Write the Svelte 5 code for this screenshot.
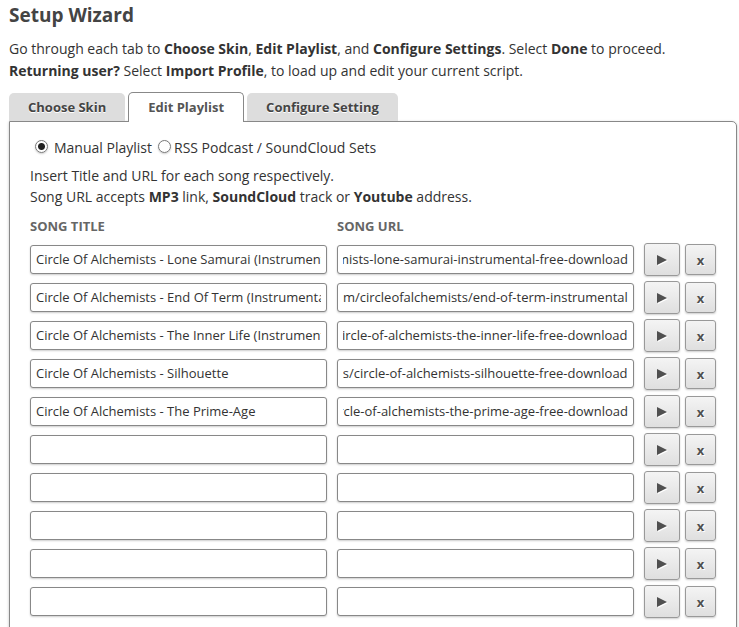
<script>
  const tabs = ["Choose Skin", "Edit Playlist", "Configure Setting"];
  const base = "https://soundcloud.com/circleofalchemists/";

  let activeTab = $state("Edit Playlist");
  let source = $state("manual");

  let songs = $state([
    {
      title: "Circle Of Alchemists - Lone Samurai (Instrumental)",
      url: base + "circle-of-alchemists-lone-samurai-instrumental-free-download",
    },
    {
      title: "Circle Of Alchemists - End Of Term (Instrumental)",
      url: base + "end-of-term-instrumental",
    },
    {
      title: "Circle Of Alchemists - The Inner Life (Instrumental)",
      url: base + "circle-of-alchemists-the-inner-life-free-download",
    },
    {
      title: "Circle Of Alchemists - Silhouette",
      url: base + "circle-of-alchemists-silhouette-free-download",
    },
    {
      title: "Circle Of Alchemists - The Prime-Age",
      url: base + "circle-of-alchemists-the-prime-age-free-download",
    },
    { title: "", url: "" },
    { title: "", url: "" },
    { title: "", url: "" },
    { title: "", url: "" },
    { title: "", url: "" },
  ]);

  // long urls only differ at the end, so show that part
  const scrollToEnd = (node) => {
    node.scrollLeft = node.scrollWidth;
  };

  const clearSong = (song) => {
    song.title = "";
    song.url = "";
  };
</script>

<main>
  <h1>Setup Wizard</h1>
  <p class="intro">
    Go through each tab to <b>Choose Skin</b>, <b>Edit Playlist</b>, and <b>Configure Settings</b>. Select <b>Done</b> to proceed.<br />
    <b>Returning user?</b> Select <b>Import Profile</b>, to load up and edit your current script.
  </p>

  <div class="tabs" role="tablist">
    {#each tabs as tab}
      <button
        class="tab"
        class:active={tab === activeTab}
        role="tab"
        aria-selected={tab === activeTab}
        onclick={() => (activeTab = tab)}>{tab}</button>
    {/each}
  </div>

  <section class="panel">
    <div class="sources">
      <label class="manual">
        <input type="radio" name="source" value="manual" bind:group={source} />
        Manual Playlist
      </label>
      <label>
        <input type="radio" name="source" value="rss" bind:group={source} />
        RSS Podcast / SoundCloud Sets
      </label>
    </div>

    <p class="help">
      Insert Title and URL for each song respectively.<br />
      Song URL accepts <b>MP3</b> link, <b>SoundCloud</b> track or <b>Youtube</b> address.
    </p>

    <div class="row heads">
      <span id="title-head">Song Title</span>
      <span id="url-head">Song URL</span>
    </div>

    {#each songs as song}
      <div class="row">
        <input class="field" type="text" aria-labelledby="title-head" bind:value={song.title} />
        <input class="field" type="text" aria-labelledby="url-head" bind:value={song.url} use:scrollToEnd />
        <div class="actions">
          <button class="btn play" aria-label="Play">
            <svg width="11" height="12" viewBox="0 0 11 12"><path d="M1 2v10l10-5z" fill="#fff" /><path d="M0 1v10l10-5z" fill="#505050" /></svg>
          </button>
          <button class="btn remove" onclick={() => clearSong(song)}>x</button>
        </div>
      </div>
    {/each}
  </section>
</main>

<style>
  :global(body) {
    background: #fff;
  }
  main {
    padding: 0 2px 0 9px;
    font-family: "Open Sans", "Noto Sans", sans-serif;
    font-size: 14px;
    color: #333;
  }
  h1 {
    margin: 0;
    padding-top: 2px;
    font-size: 19px;
    line-height: 26px;
    color: #444;
  }
  .intro {
    margin: 10px 0;
    line-height: 22px;
  }
  .tabs {
    display: flex;
    align-items: flex-end;
    gap: 3px;
    margin-bottom: -1px;
    position: relative;
  }
  .tab {
    height: 28px;
    margin-bottom: 1px;
    padding: 0 19px;
    border: 0;
    border-radius: 5px 5px 0 0;
    background: #ddd;
    font: bold 13px "Open Sans", "Noto Sans", sans-serif;
    color: #444;
    text-shadow: 0 1px 0 #fff;
  }
  .tab.active {
    height: 30px;
    margin-bottom: 0;
    padding-bottom: 2px;
    border: 1px solid #888;
    border-bottom: 0;
    background: #fff;
    color: #555;
  }
  .panel {
    padding: 15px 20px 20px;
    border: 1px solid #888;
    border-radius: 0 5px 5px 5px;
    box-shadow: 0 1px 3px rgba(0, 0, 0, 0.25);
  }
  .sources {
    display: flex;
    gap: 6px;
    padding-left: 5px;
    line-height: 22px;
  }
  .sources label {
    display: flex;
    align-items: center;
    gap: 3px;
  }
  .sources .manual {
    gap: 6px;
  }
  .sources input {
    appearance: none;
    width: 13px;
    height: 13px;
    margin: 0 0 3px;
    border: 1px solid #777;
    border-radius: 50%;
    box-shadow: 0 1px 2px rgba(0, 0, 0, 0.2);
  }
  .sources input:checked {
    background: radial-gradient(circle, #222 3px, #fff 4px);
  }
  .help {
    margin: 6px 0 9px;
    line-height: 21px;
  }
  .row {
    display: grid;
    grid-template-columns: 1fr 1fr 72px;
    gap: 10px;
    align-items: center;
    height: 38px;
  }
  .heads {
    height: 20px;
    margin-bottom: 4px;
    font-size: 13px;
    font-weight: bold;
    text-transform: uppercase;
    color: #666;
  }
  .field {
    box-sizing: border-box;
    width: 100%;
    height: 29px;
    padding: 0 5px;
    border: 1px solid #888;
    border-radius: 3px;
    background: #fff;
    box-shadow: 0 1px 2px rgba(0, 0, 0, 0.2);
    font: 13px "Open Sans", "Noto Sans", sans-serif;
    color: #333;
  }
  .actions {
    display: flex;
    align-items: center;
    gap: 5px;
  }
  .btn {
    display: flex;
    align-items: center;
    justify-content: center;
    padding: 2px 0 0;
    border: 1px solid #999;
    border-radius: 3px;
    background: linear-gradient(#f4f4f4, #dfdfdf);
    box-shadow: 0 1px 2px rgba(0, 0, 0, 0.2);
    font: bold 13px "Open Sans", "Noto Sans", sans-serif;
    color: #505050;
    text-shadow: 1px 1px 0 #fff;
  }
  .play {
    width: 36px;
    height: 33px;
  }
  .remove {
    width: 31px;
    height: 31px;
  }
</style>
